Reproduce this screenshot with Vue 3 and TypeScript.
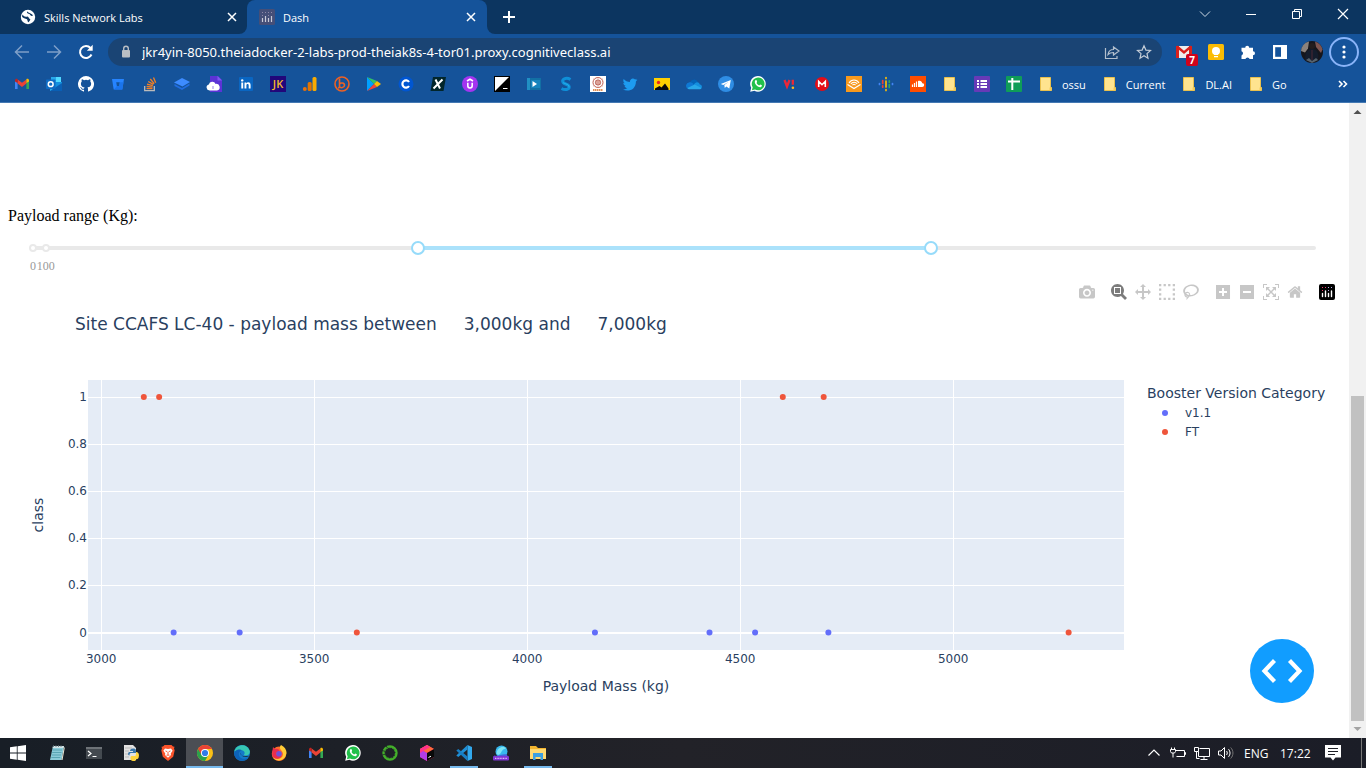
<script setup lang="ts">
import { computed, onBeforeUnmount, onMounted, ref } from 'vue'

interface Bookmark {
  name: string
  icon: string
  label?: string
}

interface Series {
  name: string
  color: string
  points: [number, number][]
}

const gmail =
  '<path d="M1 13V4.200L3.600 6v7z" fill="#4285f4"/><path d="M12.400 13V6L15 4.200V13z" fill="#34a853"/><path d="M3.600 7.500V3.500L8 6.800 12.400 3.500v4L8 11z" fill="#ea4335"/><path d="M1 4.600C1 2.800 2.700 2.400 3.600 3.200V7L1 5.500z" fill="#c5221f"/><path d="M15 4.600c0-1.800-1.700-2.200-2.600-1.400V7L15 5.500z" fill="#fbbc04"/>'
const whatsapp =
  '<path d="M.2 15.800 1.200 11.800A7.800 7.800 0 1 1 4.400 14.800z" fill="#fff"/><path d="M1.900 14.200 2.700 11.300A6.400 6.400 0 1 1 5 13.500z" fill="#22c04a"/><path d="M5.400 4.300c.5-.4 1-.3 1.200.2l.5 1.200c.1.400-.5.900-.6 1.200.6 1.200 1.500 2 2.700 2.500.4-.1.800-1 1.200-.9l1.400.7c.3.300-.1 1.300-.6 1.700-1.200.8-3 .1-4.600-1.300C5 8.100 4.100 5.800 5.400 4.300z" fill="#fff"/>'
const folder =
  '<path d="M2.500 1.500h10v10h1v3h-11z" fill="#ffe48f" stroke="#e9c04d"/><path d="M11.500 11.500h2v3h-2z" fill="#f5cc5b"/>'

const bookmarks: Bookmark[] = [
  { name: 'Gmail', icon: gmail },
  { name: 'Outlook', icon: '<path d="M5 1h10v6H5z" fill="#28a8ea"/><path d="M10 1h5v6h-5z" fill="#50d9ff"/><path d="M4 6h12v9H4z" fill="#1490df"/><path d="M4 8l6 4 6-5v8H4z" fill="#28a8ea"/><path d="M4 15l12-8v8z" fill="#0a5fb4"/><rect y="3.500" width="9.500" height="9.500" rx=".8" fill="#0f6cc4"/><circle cx="4.700" cy="8.200" r="2.400" fill="none" stroke="#fff" stroke-width="1.500"/>' },
  { name: 'GitHub', icon: '<path fill="#fff" d="M8 0a8 8 0 0 0-2.530 15.590c.4.070.55-.17.55-.38v-1.490c-2.230.49-2.700-.94-2.700-.94-.36-.92-.89-1.170-.89-1.170-.73-.5.050-.49.050-.49.810.06 1.230.83 1.230.83.720 1.230 1.880.87 2.340.67.070-.52.280-.88.510-1.080-1.780-.2-3.640-.89-3.640-3.950 0-.87.310-1.590.82-2.150-.08-.2-.36-1.020.08-2.120 0 0 .67-.21 2.200.82a7.600 7.600 0 0 1 4 0c1.530-1.040 2.200-.82 2.200-.82.440 1.100.16 1.920.08 2.120.51.560.82 1.270.82 2.150 0 3.070-1.870 3.750-3.650 3.950.29.250.54.730.54 1.480v2.190c0 .21.150.46.550.38A8 8 0 0 0 8 0z"/>' },
  { name: 'Bitbucket', icon: '<path fill-rule="evenodd" d="M2 3h12l-1.700 10.500H3.700zM6.200 6.300l.7 3.600h2.300l.6-3.600z" fill="#2684ff"/><path d="M13.500 6.300H9.900l-.6 3.600H6.900l-2.700 3.300.2.300h7.900z" fill="#1a74ec"/>' },
  { name: 'Stack Overflow', icon: '<path d="M2.700 10v4.700h9.600V10" fill="none" stroke="#bcbbbb" stroke-width="1.300"/><g stroke="#f48024" stroke-width="1.300"><path d="M4.500 12.700h6M4.600 10.500l6 .6M5 8.100l5.800 1.500M6.200 5.500l5.200 2.900M8.300 3l3.900 4.600M11.500 1.400l2.200 5.300"/></g>' },
  { name: 'BookStack', icon: '<path d="M0 6.500 8 2l8 4-7.500 4.500z" fill="#3d8bff"/><path d="M.5 8v2L8 14l7.500-4.500v-2L8 12z" fill="#216de0"/>' },
  { name: 'Cloud', icon: '<path d="M4 0h8l4 4v12H4z" fill="#5c33d6"/><path d="M11.500 0v4.500H16z" fill="#7e5af2"/><path d="M3.500 14.500a3 3 0 0 1-.7-5.900 3.600 3.600 0 0 1 6.800-.7 3.300 3.300 0 0 1 1.400 6.600z" fill="#fff"/><path d="M7 10v3" stroke="#9c83ea"/>' },
  { name: 'LinkedIn', icon: '<rect x="1" y="1" width="14" height="14" rx="1" fill="#0a66c2"/><circle cx="4.200" cy="4.400" r="1.200" fill="#fff"/><path d="M3.300 6.500h1.900v6H3.300zM6.500 6.500h1.800v.9c1-1.700 4.300-1.400 4.300 1.500v3.600h-1.900V9.500c0-2-2.300-1.800-2.300 0v3H6.500z" fill="#fff"/>' },
  { name: 'JK', icon: '<path d="M0 0h16v16H0z" fill="#21077a"/><text x="8" y="12" text-anchor="middle" font-family="Open Sans, sans-serif" font-size="11" font-weight="600" fill="#f5b82e">JK</text>' },
  { name: 'Analytics', icon: '<rect x="10.500" y="1" width="4" height="14" rx="1.500" fill="#f9ab00"/><rect x="5.700" y="6" width="4" height="9" rx="1.500" fill="#e37400"/><circle cx="2.800" cy="13" r="2" fill="#e8710a"/>' },
  { name: 'Bitly', icon: '<circle cx="8" cy="8" r="7" fill="none" stroke="#ee6123" stroke-width="1.600"/><path d="M5.500 2.500v8c0 .5-.5 1.500-1.500 1.500M5.500 8c1-1.600 5-1.400 5 1.200S6.500 12.500 5.500 10.500" fill="none" stroke="#ee6123" stroke-width="1.600"/>' },
  { name: 'Play Store', icon: '<path d="M1 1v14l7-7z" fill="#00a0ff"/><path d="M1 1l7 7 3-3z" fill="#32c269"/><path d="M1 15l7-7 3 3z" fill="#f0443d"/><path d="M11 5 8 8l3 3 4-3z" fill="#fbbc04"/>' },
  { name: 'Coursera', icon: '<circle cx="8" cy="8" r="7.500" fill="#0056d2"/><path d="M11 6a3.600 3.600 0 1 0 0 4" fill="none" stroke="#fff" stroke-width="2.200"/>' },
  { name: 'edX', icon: '<path d="M3 1h13l-2.500 14H.5z" fill="#02262b"/><path d="M5.500 3.500 10 12.500M12.500 3.500 3.500 12.500" stroke="#fff" stroke-width="2"/>' },
  { name: 'Udemy', icon: '<circle cx="8" cy="8" r="8" fill="#a435f0"/><path d="M5 5l3-1.800L11 5M5.800 6.800v3c0 3 4.400 3 4.400 0v-3" fill="none" stroke="#fff" stroke-width="1.600"/>' },
  { name: 'Hackr', icon: '<path d="M0 0h16v16H0z" fill="#000"/><path d="M1 1h14L1 15z" fill="#fff"/><path d="M9 12.500h4.500" stroke="#fff"/>' },
  { name: 'Video', icon: '<path d="M1 2h14v12H1z" fill="#1270a4"/><path d="M1 2h3v12H1z" fill="#2090c4"/><path d="M5 4h9v8H5z" fill="#1684bd"/><path d="M6.500 5 11 8l-4.500 3z" fill="#fff"/>' },
  { name: 'Scribe', icon: '<path d="M12.500 3.500C8 .8 3 3.500 5.200 6.500c1.500 2 6 1.800 6 4.500 0 2.500-4.200 3.500-7.700 1.500" fill="none" stroke="#0f8fd8" stroke-width="3"/><path d="M5 6.500c1.500 1.500 6.500 1.500 6 5" fill="none" stroke="#28b6ee"/>' },
  { name: 'NPTEL', icon: '<path d="M0 0h16v16H0z" fill="#fff"/><circle cx="8" cy="6.500" r="5" fill="none" stroke="#bf5e50"/><circle cx="8" cy="6.500" r="2.600" fill="#dfa79c" stroke="#a3392d" stroke-width=".7"/><path d="M3 2.500l10 8M13 2.500l-10 8M8 1v11" stroke="#d99b90" stroke-width=".5"/><path d="M3 14h10" stroke="#e08f57" stroke-width="1.800" stroke-dasharray="1.500 .5"/>' },
  { name: 'Twitter', icon: '<path d="M15.500 3.800l-1.600.5L15 2.800l-1.900.7C11 1.500 7.800 3 7.900 6 5.500 5.900 3.300 4.700 1.700 2.900.9 4.500 1.300 6.200 2.700 7.200L1.300 6.800c0 1.500 1 2.700 2.500 3.100l-1.300.1c.4 1.200 1.500 2 2.900 2.100-1.300 1-3 1.500-4.700 1.200 5.500 3.300 13.300.2 13.200-7.800z" fill="#1d9bf0"/>' },
  { name: 'Pictures', icon: '<path d="M0 2h16v12H0z" fill="#ffd000"/><circle cx="4.500" cy="6.500" r="1.700" fill="#e8261d"/><path d="M1 14v-1.500L5.500 10l2 1.500 3.500-4 3.500 5V14z" fill="#0b0b0b"/>' },
  { name: 'OneDrive', icon: '<path d="M4 7a4.200 4.200 0 0 1 8-.8L8 10z" fill="#0364b8"/><path d="M1.500 12.500A3.300 3.300 0 0 1 3 6.500C5 6 7 7 8 9z" fill="#0f78d4"/><path d="M8 9c1-3.500 5-3.500 5.800-.6 2.400.3 2.700 3.100 1.200 4.300z" fill="#1490df"/><path d="M1.300 12 8.500 8.500l7 3.500c-.4 1-1.300 1.300-2 1.300H3.700c-1 0-2-.5-2.400-1.300z" fill="#28a8ea"/>' },
  { name: 'Telegram', icon: '<circle cx="8" cy="8" r="8" fill="#2f8de4"/><path d="M2.800 8 12.800 4l-1.500 8.600-3-2.100-1.500 1.600-.5-3L10.500 6 5.200 8.900z" fill="#fff"/>' },
  { name: 'WhatsApp', icon: whatsapp },
  { name: 'Vi', icon: '<path d="M2.500 4 5 10.500 7.500 4M10.800 3.700v5" fill="none" stroke="#ee2737" stroke-width="2.300"/><circle cx="10.900" cy="11.800" r="1.300" fill="#ffb81c"/>' },
  { name: 'MEGA', icon: '<circle cx="8" cy="8" r="7" fill="#e30d17"/><path d="M4.700 11V5.500L8 8.700l3.300-3.200V11" fill="none" stroke="#fff" stroke-width="1.600"/>' },
  { name: 'Audible', icon: '<path d="M0 0h16v16H0z" fill="#f8991c"/><path d="M1.500 8.500 8 12.500l6.500-4M3 7c2.500-4 7.500-4 10 0M4.800 8c1.700-2.500 5-2.300 6.500 0M6.500 9.200c1-1.200 2-1.200 3 0" fill="none" stroke="#fff" stroke-width="1.100"/>' },
  { name: 'Podcasts', icon: '<g stroke-width="1.700" stroke-linecap="round"><path d="M1.500 7.500v1M14.500 7.500v1" stroke="#4285f4"/><path d="M4.700 4.500v3M4.700 9.800v1.400" stroke="#ea4335"/><path d="M8 1.500v1M8 5v6M8 13.500v1" stroke="#fbbc04"/><path d="M11.300 4.800v1.400M11.300 8.500v3" stroke="#34a853"/></g>' },
  { name: 'SoundCloud', icon: '<path d="M0 0h16v16H0z" fill="#ff4d00"/><path d="M2.500 8.500v2.500M4.500 7v4M6.500 5.500V11" stroke="#fff" stroke-width="1.200"/><path d="M8 11V5c2-1 4 .2 4.200 2.300 2.600-.5 2.600 3.700 0 3.700z" fill="#fff"/>' },
  { name: 'Folder', icon: folder },
  { name: 'Forms', icon: '<rect width="16" height="16" rx="1" fill="#673ab7"/><path d="M3 5h2M3 8h2M3 11h2M6.500 5H13M6.500 8H13M6.500 11H13" stroke="#fff" stroke-width="1.800"/>' },
  { name: 'Sheets', icon: '<rect width="16" height="16" rx="1" fill="#0f9d58"/><path d="M2 5.500h12M6.300 2v12" stroke="#fff" stroke-width="2"/><path d="M8 9.500h5" stroke="#0f9d58"/>' },
  { name: 'ossu', icon: folder, label: 'ossu' },
  { name: 'Current', icon: folder, label: 'Current' },
  { name: 'DL.AI', icon: folder, label: 'DL.AI' },
  { name: 'Go', icon: folder, label: 'Go' },
]

const extensions = [
  { name: 'Mail checker', icon: '<path d="M0 2h16v12H0z" fill="#eee"/><path d="M0 2h3v12H0zM13 2h3v12h-3z" fill="#d9201c"/><path d="M1 2.500l7 6 7-6" fill="none" stroke="#d9201c" stroke-width="2.400"/>', badge: '7' },
  { name: 'Keep', icon: '<rect width="16" height="16" rx="1.500" fill="#fbbc04"/><circle cx="8" cy="7" r="4" fill="#fff"/><path d="M6 9h4v2H6zM6 12h4v1.200H6z" fill="#fff"/>' },
  { name: 'Extensions', icon: '<path d="M1.500 3.800h3.700a2 2 0 1 1 4 0H13v3.400a2 2 0 1 1 0 4V15H9.600a2.200 2.200 0 0 0-4.200 0H1.500v-3.600a2.200 2.200 0 0 0 0-4.200z" fill="#fff"/>' },
  { name: 'Side panel', icon: '<path d="M1 1h14v14H1z" fill="#fff"/><path d="M3.200 3.200H9v9.600H3.200z" fill="#15539a"/>' },
]

const apps = [
  { name: 'Notepad', icon: '<path d="M4 1h11l-2.500 14H1z" fill="#8bcbd8"/><path d="M4 1h11l-.4 2H3.600z" fill="#d2e3e6"/><path d="M3.500 5h9.500M3.200 7.500H12.500M2.800 10H12M2.300 12.500h9" stroke="#4d9aaa" stroke-width=".8"/><path d="M15.300 2.500 13 15" stroke="#f2edda"/><path d="M4.500 0v2M7 0v2M9.500 0v2M12 0v2" stroke="#586970" stroke-width=".8"/>' },
  { name: 'Terminal', icon: '<path d="M0 2h16v12H0z" fill="#444a50"/><path d="M0 2h16v2H0z" fill="#6e7378"/><path d="M2 6l3 2.500L2 11M6.500 11.500h4" fill="none" stroke="#fff" stroke-width="1.200"/>' },
  { name: 'IDLE', icon: '<path d="M1 0h9l3 3v12H1z" fill="#e2e2e2"/><path d="M2 3h7M2 6h4M2 9h3M2 12h4" stroke="#b9b9b9"/><path d="M10 3.500c3 0 3 1 3 4.500H8c-1.300 0-1.500 1-1.500 2.500C4.500 10.500 4.800 7 6.500 7H10V6H7c0-1.500 1-2.500 3-2.500z" fill="#3776ab"/><path d="M13 7c3 0 3.500 3 2.500 6-.4 1-1.500 1.200-3 1.200V16H10c-2 0-2.500-1.500-2.500-3s.5-2 2-2H12C13 11 13 9 13 7z" fill="#ffd43b"/>' },
  { name: 'Brave', icon: '<path d="M4.500 0h7L13 1.500l1.500.2-.5 2 .7 1.500-1.500 6.500L8 16l-5.200-4.300L1.300 5.200 2 3.700l-.5-2L3 1.500z" fill="#fb542b"/><path d="M5 3.500 8 4l3-.5 1.600 2.300-1.900 2.700.3 1.400L8 12.800 5 9.900l.3-1.400-1.900-2.700z" fill="#fff"/><path d="M5.500 6l1.800.7M10.500 6l-1.800.7M8 7v3M6.500 10.200h3" stroke="#fb542b" stroke-width=".9"/>' },
  { name: 'Chrome', active: true, icon: '<circle cx="8" cy="8" r="8" fill="#fbc116"/><path d="M1.070 4A8 8 0 0 0 8 16l3.460-6L8 8z" fill="#2ba24c"/><path d="M8 4h6.930A8 8 0 0 0 1.070 4L4.540 10z" fill="#ea4335"/><circle cx="8" cy="8" r="4" fill="#fff"/><circle cx="8" cy="8" r="3.100" fill="#317be9"/>' },
  { name: 'Edge', icon: '<circle cx="8" cy="8" r="8" fill="#1479c9"/><path d="M.3 6.500C2-1.500 13.500-2.200 15.800 6c.6 3.500-3 5.500-6 4 1.700-1.800.8-4.500-2.300-4.700C4.400 5.100 1.500 5.900.3 6.500z" fill="#37c7b2"/><path d="M.2 9C1 3.500 6.500 4 8 5.300 5 6 4 9 5.500 11.500 7 14 11 14.600 14.400 12.700A8 8 0 0 1 .2 9z" fill="#0d62b8"/><path d="M6.500 7.800c-.5 2.500 3 4.600 9 3-3.200 2.600-8.500 1.200-9-3z" fill="#1c2028"/>' },
  { name: 'Firefox', icon: '<circle cx="8" cy="8.800" r="7.200" fill="#ff6a28"/><path d="M10 0c4.800 2.500 7 7 4.500 11.200C12.500 16 5 17 2 12.500c4 2.600 9 1.500 10-2.500.7-3-2.300-4.500-3-6.500C8.600 2.200 9 1 10 0z" fill="#ffcb36"/><path d="M1.500 5.500 2 2l2 2c2.500-.5 4 .5 4.500 2L5.500 7.500c-1 3 2.500 4.500 5.500 3-2 4.500-8.800 4-9.800-.5z" fill="#e92d4e"/><circle cx="8" cy="8.800" r="2.800" fill="#7051d8"/>' },
  { name: 'Gmail', icon: gmail },
  { name: 'WhatsApp', icon: whatsapp },
  { name: 'Anaconda', icon: '<circle cx="8" cy="8" r="6.600" fill="none" stroke="#43b02a" stroke-width="2.200"/><circle cx="8" cy="8" r="5.400" fill="none" stroke="#43b02a" stroke-width="1" stroke-dasharray="2 1"/><path d="M0 5.500l3 .8M.3 10l2.700-.8M4 .8 5.500 3" stroke="#1f2229" stroke-width=".8"/>' },
  { name: 'Toolbox', icon: '<path d="M8 0l7 4v8l-7 4-7-4V4z" fill="#fe2857"/><path d="M1 4l7-4 7 4-7 4z" fill="#ff6b3d"/><path d="M1 4l7 4v8l-7-4z" fill="#b13de8"/><path d="M8 0 1 4v4l10-6z" fill="#ff318c"/><path d="M8 8l7-4v8l-7 4z" fill="#090909"/><path d="M9.500 12.500l2.500-1.300" stroke="#fff"/>' },
  { name: 'VS Code', running: true, icon: '<path d="M11.500 0 16 2v12l-4.500 2z" fill="#32a9ee"/><path d="M11.500 0v4.500L2.300 12 .3 10.500z" fill="#1f8fd6"/><path d="M11.500 16v-4.500L2.300 4 .3 5.500z" fill="#187fc5"/>' },
  { name: 'Dev preview', icon: '<circle cx="8.500" cy="6.500" r="6" fill="#37b8ed"/><path d="M3.500 8.500C4 2.500 10 .5 13 3.500 8 4 9 9 5 10z" fill="#7de4f4"/><path d="M1 10.500c5 1 8-2 13-1l1 3H1z" fill="#4763db"/><rect y="11" width="16" height="4.500" rx="1" fill="#7f35d3"/><path d="M2 13.300h12" stroke="#d9b8fa" stroke-width="1.200" stroke-dasharray="1 .6"/>' },
  { name: 'File Explorer', running: true, icon: '<path d="M0 1h6l2 2h8v11H0z" fill="#f3b52f"/><path d="M0 4h16v10H0z" fill="#ffd970"/><path d="M3 8h10v7h-2.500v-3h-5v3H3z" fill="#3c9fe0"/>' },
]

const modeGroups = [
  [{ name: 'Download plot as a png', w: 1000, d: 'm500 450c-83 0-150-67-150-150 0-83 67-150 150-150 83 0 150 67 150 150 0 83-67 150-150 150z m400 150h-120c-16 0-34 13-39 29l-31 93c-6 15-23 28-40 28h-340c-16 0-34-13-39-28l-31-94c-6-15-23-28-40-28h-120c-55 0-100-45-100-100v-450c0-55 45-100 100-100h800c55 0 100 45 100 100v450c0 55-45 100-100 100z m-400-550c-138 0-250 112-250 250 0 138 112 250 250 250 138 0 250-112 250-250 0-138-112-250-250-250z m365 380c-19 0-35 16-35 35 0 19 16 35 35 35 19 0 35-16 35-35 0-19-16-35-35-35z' }],
  [
    { name: 'Zoom', w: 1000, on: true, d: 'm1000-25l-250 251c40 63 63 138 63 218 0 224-182 406-407 406-224 0-406-182-406-406s183-406 407-406c80 0 155 22 218 62l250-250 125 125z m-812 250l0 438 437 0 0-438-437 0z m62 375l313 0 0-312-313 0 0 312z' },
    { name: 'Pan', w: 1000, d: 'm1000 350l-187 188 0-125-250 0 0 250 125 0-188 187-187-187 125 0 0-250-250 0 0 125-188-188 186-187 0 125 252 0 0-250-125 0 187-188 188 188-125 0 0 250 250 0 0-126 187 188z' },
    { name: 'Box Select', w: 1000, d: 'm0 850l0-143 143 0 0 143-143 0z m286 0l0-143 143 0 0 143-143 0z m285 0l0-143 143 0 0 143-143 0z m286 0l0-143 143 0 0 143-143 0z m-857-286l0-143 143 0 0 143-143 0z m857 0l0-143 143 0 0 143-143 0z m-857-285l0-143 143 0 0 143-143 0z m857 0l0-143 143 0 0 143-143 0z m-857-286l0-143 143 0 0 143-143 0z m286 0l0-143 143 0 0 143-143 0z m285 0l0-143 143 0 0 143-143 0z m286 0l0-143 143 0 0 143-143 0z' },
    { name: 'Lasso Select', w: 1031, d: 'm1018 538c-36 207-290 336-568 286-277-48-473-256-436-463 10-57 36-108 76-151-13-66 11-137 68-183 34-28 75-41 114-42l-55-70 0 0c-2-1-3-2-4-3-10-14-8-34 5-45 14-11 34-8 45 4 1 1 2 3 2 5l0 0 113 140c16 11 31 24 45 40 4 3 6 7 8 11 48-3 100 0 151 9 278 48 473 255 436 462z m-624-379c-80 14-149 48-197 96 42 42 109 47 156 9 33-26 47-66 41-105z m-187-74c-19 16-33 37-39 60 50-32 109-55 174-68-42-25-95-24-135 8z m360 75c-34-7-69-9-102-8 8 62-16 128-68 170-73 59-175 54-244-5-9 20-16 40-20 61-28 159 121 317 333 354s407-60 434-217c28-159-121-318-333-355z' },
  ],
  [
    { name: 'Zoom in', w: 875, d: 'm1 787l0-875 875 0 0 875-875 0z m687-500l-187 0 0-187-125 0 0 187-188 0 0 125 188 0 0 187 125 0 0-187 187 0 0-125z' },
    { name: 'Zoom out', w: 875, d: 'm0 788l0-876 875 0 0 876-875 0z m688-500l-500 0 0 125 500 0 0-125z' },
    { name: 'Autoscale', w: 1000, d: 'm250 850l-187 0-63 0 0-62 0-188 63 0 0 188 187 0 0 62z m688 0l-188 0 0-62 188 0 0-188 62 0 0 188 0 62-62 0z m-875-938l0 188-63 0 0-188 0-62 63 0 187 0 0 62-187 0z m875 188l0-188-188 0 0-62 188 0 62 0 0 62 0 188-62 0z m-125 188l-1 0-93-94-156 156 156 156 92-93 2 0 0 250-250 0 0-2 93-92-156-156-156 156 94 92 0 2-250 0 0-250 0 0 93 93 157-156-157-156-93 94 0 0 0-250 250 0 0 0-94 93 156 157 156-157-93-93 0 0 250 0 0 250z' },
    { name: 'Reset axes', w: 928, d: 'm786 296v-267q0-15-11-26t-25-10h-214v214h-143v-214h-214q-15 0-25 10t-11 26v267q0 1 0 2t0 2l321 264 321-264q1-1 1-4z m124 39l-34-41q-5-5-12-6h-2q-7 0-12 3l-386 322-386-322q-7-4-13-4-7 2-12 7l-35 41q-4 5-3 13t6 12l401 334q18 15 42 15t43-15l136-114v109q0 8 5 13t13 5h107q8 0 13-5t5-13v-227l122-102q5-5 6-12t-4-13z' },
  ],
]

const low = ref(3000)
const high = ref(7000)
const maxPayload = 10000
const marks = [0, 100]
const share = (v: number) => (v / maxPayload) * 100 + '%'

const series: Series[] = [
  { name: 'v1.1', color: '#636efa', points: [[3170, 0], [3325, 0], [4159, 0], [4428, 0], [4535, 0], [4707, 0]] },
  { name: 'FT', color: '#ef553b', points: [[3100, 1], [3136, 1], [4600, 1], [4696, 1], [3600, 0], [5271, 0]] },
]

const chartEl = ref<HTMLElement | null>(null)
const chartWidth = ref(1333)
const plot = { left: 80, right: 217, top: 100, height: 270 }
const plotWidth = computed(() => chartWidth.value - plot.left - plot.right)
const xAt = (mass: number) => plot.left + ((mass - 2969) / 2432) * plotWidth.value
const yAt = (v: number) => plot.top + 252.5 - v * 235.5
const xTicks = [3000, 3500, 4000, 4500, 5000]
const yTicks = [0, 0.2, 0.4, 0.6, 0.8, 1]
const kg = (v: number) => v.toLocaleString('en-US') + 'kg'
const title = computed(
  () => `Site CCAFS LC-40 - payload mass between     ${kg(low.value)} and     ${kg(high.value)}`,
)

let observer: ResizeObserver | undefined
onMounted(() => {
  observer = new ResizeObserver((entries) => {
    chartWidth.value = Math.round(entries[0].contentRect.width)
  })
  if (chartEl.value) observer.observe(chartEl.value)
})
onBeforeUnmount(() => observer?.disconnect())
</script>

<template>
  <div class="desktop">
    <header class="browser">
      <div class="tabstrip">
        <div class="tab first">
          <svg class="i16" viewBox="0 0 16 16"><circle cx="8" cy="8" r="7.200" fill="#fff" /><path d="M2.500 5.500C4 7.500 5 8 7.500 7.500c1.500 0 1 2.500 2.500 2.500 1 .5-.5 2-1.500 3.200-.8 0-.8-2-1.500-3C5.500 9.700 2.500 9 2 7.500zM7 2.500c1 .2 1 1 2.500 1.500S12 5 13 6.500c-1.500 1.200-3-.5-3.500-1.500C8 4.700 6.500 4.300 7 2.500z" fill="#0c3560" /></svg>
          <span class="tab-title">Skills Network Labs</span>
          <button class="bare close" aria-label="Close Skills Network Labs"><svg class="i16" viewBox="0 0 16 16"><path d="M4 4l8 8M12 4l-8 8" stroke="#fff" stroke-width="1.500" /></svg></button>
        </div>
        <div class="tab active">
          <svg class="i16" viewBox="0 0 16 16"><rect width="16" height="16" rx="1.500" fill="#454f78" /><path d="M3.500 9v4M6.500 7v6M9.500 9v4M12.500 7v6" stroke="#c8cad8" stroke-width="1.200" /><path d="M3 3.500h1M6 3.500h1M9 3.500h1M12 3.500h1M3 6.500h1M9 6.500h1" stroke="#8f88a8" /></svg>
          <span class="tab-title">Dash</span>
          <button class="bare close" aria-label="Close Dash"><svg class="i16" viewBox="0 0 16 16"><path d="M4 4l8 8M12 4l-8 8" stroke="#fff" stroke-width="1.500" /></svg></button>
        </div>
        <div class="new-tab-slot">
          <button class="bare" aria-label="New tab"><svg class="i16" viewBox="0 0 16 16"><path d="M8 2v12M2 8h12" stroke="#fff" stroke-width="2" /></svg></button>
        </div>
        <div class="window-controls">
          <button class="bare" aria-label="Search tabs"><svg class="i16" viewBox="0 0 16 16"><path d="M3 5.500l5 5 5-5" fill="none" stroke="#cfdae6" /></svg></button>
          <button class="bare" aria-label="Minimize"><svg class="i16" viewBox="0 0 16 16"><path d="M3 8.500h10" stroke="#fff" /></svg></button>
          <button class="bare" aria-label="Restore"><svg class="i16" viewBox="0 0 16 16"><path d="M3.500 5.500h7v7h-7zM5.500 5.500v-2h7v7h-2" fill="none" stroke="#fff" /></svg></button>
          <button class="bare" aria-label="Close window"><svg class="i16" viewBox="0 0 16 16"><path d="M3 3l10 10M13 3L3 13" stroke="#fff" stroke-width="1.200" /></svg></button>
        </div>
      </div>

      <div class="toolbar">
        <button class="bare nav" aria-label="Back"><svg class="i16" viewBox="0 0 16 16"><path d="M15 8H2M8 1.500 1.500 8 8 14.500" fill="none" stroke="#7e9fc8" stroke-width="1.500" /></svg></button>
        <button class="bare nav" aria-label="Forward"><svg class="i16" viewBox="0 0 16 16"><path d="M1 8h13M8 1.500 14.500 8 8 14.500" fill="none" stroke="#7e9fc8" stroke-width="1.500" /></svg></button>
        <button class="bare nav" aria-label="Reload"><svg class="i16" viewBox="0 0 16 16"><path d="M13.500 10.500A6 6 0 1 1 12.500 4" fill="none" stroke="#fff" stroke-width="2" /><path d="M14.700.8v6H8.800z" fill="#fff" /></svg></button>
        <div class="omnibox">
          <svg class="i16" viewBox="0 0 16 16"><rect x="4" y="6" width="8" height="7.500" rx="1" fill="#b9bec4" /><path d="M5.700 7V4.500a2.300 2.300 0 0 1 4.600 0V7" fill="none" stroke="#b9bec4" stroke-width="1.400" /></svg>
          <input class="address" type="text" aria-label="Address" value="jkr4yin-8050.theiadocker-2-labs-prod-theiak8s-4-tor01.proxy.cognitiveclass.ai" />
          <button class="bare nav" aria-label="Share"><svg class="i16" viewBox="0 0 16 16"><path d="M1.500 4v10.500H13V12M4 10.500C4.500 7 6.500 5.500 9.500 5.500V3L15 7l-5.500 4V8.500C7 8.500 5.500 9 4 10.500z" fill="none" stroke="#b3bfcd" stroke-width="1.200" /></svg></button>
          <button class="bare nav star" aria-label="Bookmark this tab"><svg class="i16" viewBox="0 0 16 16"><path d="M8 1.800l1.900 4.300 4.600.4-3.500 3.100 1 4.600L8 11.800l-4 2.400 1-4.600L1.500 6.500l4.600-.4z" fill="none" stroke="#c3ccd7" stroke-width="1.200" /></svg></button>
        </div>
        <div class="extensions">
          <button v-for="e in extensions" :key="e.name" class="bare nav ext" :aria-label="e.name">
            <svg class="i16" viewBox="0 0 16 16" v-html="e.icon"></svg>
            <span v-if="e.badge" class="badge">{{ e.badge }}</span>
          </button>
          <button class="bare nav" aria-label="Profile">
            <svg class="avatar" viewBox="0 0 22 22"><circle cx="11" cy="11" r="11" fill="#16161c" /><path d="M0 10A11 11 0 0 1 8 .5l-1 7-3 4z" fill="#8c827c" /><path d="M14 .6a11 11 0 0 1 7.500 8L20 12l-5-6z" fill="#7d5550" /><circle cx="11" cy="5" r="3" fill="#241d1d" /><path d="M4 20c0-7 1-12 7-12s7 5 6 12z" fill="#141c2c" /><path d="M11 9v10" stroke="#4a2732" /><path d="M5 19l3-2 3 3 4-3 2 2-6 3z" fill="#57626c" /></svg>
          </button>
          <button class="bare menu" aria-label="Chrome menu"><svg class="i16" viewBox="0 0 16 16" fill="#fff"><circle cx="8" cy="3" r="1.600" /><circle cx="8" cy="8" r="1.600" /><circle cx="8" cy="13" r="1.600" /></svg></button>
        </div>
      </div>

      <nav class="bookmarks" aria-label="Bookmarks">
        <a v-for="b in bookmarks" :key="b.name" class="bookmark" href="#" :aria-label="b.name">
          <svg class="i16" viewBox="0 0 16 16" v-html="b.icon"></svg>
          <span v-if="b.label">{{ b.label }}</span>
        </a>
        <button class="bare more" aria-label="More bookmarks"><svg class="i16" viewBox="0 0 16 16"><path d="M4 5l3 3-3 3M8.500 5l3 3-3 3" fill="none" stroke="#fff" stroke-width="1.600" /></svg></button>
      </nav>
    </header>

    <div class="viewport">
      <main class="page">
        <p class="range-label">Payload range (Kg):</p>
        <div class="slider">
          <div class="rail"></div>
          <div class="fill-area">
            <div class="fill" :style="{ marginLeft: share(low), width: share(high - low) }"></div>
          </div>
          <div class="marks">
            <span v-for="m in marks" :key="m" class="mark" :style="{ left: share(m) }">
              <i class="dot"></i>{{ m }}
            </span>
          </div>
          <input v-model.number="low" type="range" min="0" :max="maxPayload" step="1000" aria-label="Minimum payload" />
          <input v-model.number="high" type="range" min="0" :max="maxPayload" step="1000" aria-label="Maximum payload" />
        </div>

        <section ref="chartEl" class="chart">
          <svg class="plot" :width="chartWidth" height="450">
            <text class="title" x="67" y="50">{{ title }}</text>
            <rect :x="plot.left" :y="plot.top" :width="plotWidth" :height="plot.height" fill="#e5ecf6" />
            <g stroke="#fff" shape-rendering="crispEdges">
              <line v-for="t in xTicks" :key="t" :x1="xAt(t)" :x2="xAt(t)" :y1="plot.top" :y2="plot.top + plot.height" />
              <line v-for="t in yTicks" :key="t" :x1="plot.left" :x2="plot.left + plotWidth" :y1="yAt(t)" :y2="yAt(t)" :stroke-width="t === 0 ? 2 : 1" />
            </g>
            <g v-for="s in series" :key="s.name" :fill="s.color">
              <circle v-for="p in s.points" :key="p[0]" :cx="xAt(p[0])" :cy="yAt(p[1])" r="3" />
            </g>
            <g class="tick" text-anchor="middle">
              <text v-for="t in xTicks" :key="t" :x="xAt(t)" y="383">{{ t }}</text>
            </g>
            <g class="tick" text-anchor="end">
              <text v-for="t in yTicks" :key="t" :x="plot.left - 1" :y="yAt(t) + 4">{{ t }}</text>
            </g>
            <text class="axis" text-anchor="middle" :x="plot.left + plotWidth / 2" y="411">Payload Mass (kg)</text>
            <text class="axis" text-anchor="middle" transform="translate(35 235) rotate(-90)">class</text>
            <g :transform="`translate(${plot.left + plotWidth + 23} 0)`">
              <text class="axis" x="0" y="118">Booster Version Category</text>
              <g v-for="(s, i) in series" :key="s.name">
                <circle cx="18" :cy="133 + i * 19" r="3" :fill="s.color" />
                <text class="tick" x="38" :y="137 + i * 19">{{ s.name }}</text>
              </g>
            </g>
          </svg>
          <div class="modebar">
            <div v-for="(g, i) in modeGroups" :key="i" class="mode-group">
              <button v-for="b in g" :key="b.name" class="bare mode" :class="{ on: b.on }" :aria-label="b.name">
                <svg class="i16" :viewBox="`0 0 ${b.w} 1000`"><path :d="b.d" transform="matrix(1 0 0 -1 0 850)" /></svg>
              </button>
            </div>
            <div class="mode-group">
              <a class="mode" href="#" aria-label="Produced with Plotly">
                <svg class="i16" viewBox="0 0 16 16"><rect width="16" height="16" rx="2" fill="#000" /><path d="M3.500 9.500v3M6.500 7v5.500M9.500 9.500v3M12.500 7v5.500" stroke="#fff" stroke-width="1.400" stroke-linecap="round" /><path d="M3 3.500h1M3 6.500h1M6 3.500h1" stroke="#ef3e6d" stroke-width="1.200" /><path d="M9 3.500h1M9 6.500h1M12 3.500h1" stroke="#b8aee8" stroke-width="1.200" /></svg>
              </a>
            </div>
          </div>
        </section>

        <button class="bare devtools" aria-label="Toggle debug menu"><svg viewBox="0 0 64 64"><path d="M24.500 21.500 14.500 32l10 10.500M39.500 21.500 49.500 32l-10 10.500" fill="none" stroke="#fff" stroke-width="4.200" /></svg></button>
      </main>
      <div class="scrollbar">
        <button class="bare arrow" aria-label="Scroll up"><svg viewBox="0 0 17 17"><path d="M4.500 11 8.500 7l4 4z" fill="#505050" /></svg></button>
        <div class="track"><div class="thumb"></div></div>
        <button class="bare arrow" aria-label="Scroll down"><svg viewBox="0 0 17 17"><path d="M4.500 6 8.500 10l4-4z" fill="#a3a3a3" /></svg></button>
      </div>
    </div>

    <footer class="taskbar">
      <button class="bare start" aria-label="Start"><svg class="i16" viewBox="0 0 16 16"><path d="M0 2.300 6.800 1.300V7.500H0zM7.600 1.200 16 0v7.500H7.600zM0 8.400h6.800v6.300L0 13.700zM7.600 8.400H16V16l-8.400-1.200z" fill="#fff" /></svg></button>
      <button v-for="a in apps" :key="a.name" class="bare app" :class="{ active: a.active, running: a.running }" :aria-label="a.name">
        <svg class="i16" viewBox="0 0 16 16" v-html="a.icon"></svg>
      </button>
      <div class="tray">
        <button class="bare tray-btn" aria-label="Show hidden icons"><svg class="i16" viewBox="0 0 16 16"><path d="M2.500 10.500 8 5l5.500 5.500" fill="none" stroke="#fff" stroke-width="1.200" /></svg></button>
        <button class="bare tray-btn" aria-label="Battery"><svg class="i16" viewBox="0 0 16 16"><path d="M5.500 5.500h9v6h-8M14.500 7.500h1v2h-1" fill="none" stroke="#fff" /><path d="M1.500 2.500v2M4.500 2.500v2M.5 4.500h5v2l-1 1.500h-3l-1-1.500zM3 8v4.500" fill="none" stroke="#fff" /></svg></button>
        <button class="bare tray-btn" aria-label="Network"><svg class="i16" viewBox="0 0 16 16"><path d="M5.500 3.500h10v8h-11v-5M10 11.500v3M6.500 14.500h7" fill="none" stroke="#fff" /><path d="M.5 2.500h4v4h-4zM2.500 6.500v7h3" fill="none" stroke="#fff" /></svg></button>
        <button class="bare tray-btn" aria-label="Volume"><svg class="i16" viewBox="0 0 16 16"><path d="M.5 6H3l3.500-3.500v11L3 10H.5z" fill="none" stroke="#fff" /><path d="M8.500 6c1 1.200 1 2.800 0 4M10.500 4.200c2 2.300 2 5.300 0 7.600" fill="none" stroke="#fff" /><path d="M12.700 2.500c3 3.300 3 7.700 0 11" fill="none" stroke="#777" /></svg></button>
        <span class="lang">ENG</span>
        <time class="clock">17:22</time>
        <button class="bare notes" aria-label="Notifications"><svg class="i16" viewBox="0 0 16 16"><path d="M0 0h16v12.500h-5.500L8 15.500 5.500 12.500H0z" fill="#fff" /><path d="M3 3.500h10M3 6.500h10M3 9.500h7" stroke="#1e2027" /></svg></button>
        <button class="bare show-desktop" aria-label="Show desktop"></button>
      </div>
    </footer>
  </div>
</template>

<style>
body {
  margin: 0;
  overflow: hidden;
}
</style>

<style scoped>
.desktop {
  display: flex;
  flex-direction: column;
  height: 100vh;
  background: #fff;
  font-family: "Open Sans", "Noto Sans", sans-serif;
  font-size: 12px;
  color: #fff;
}
.bare {
  display: flex;
  align-items: center;
  justify-content: center;
  margin: 0;
  padding: 0;
  border: 0;
  background: none;
  color: inherit;
  font: inherit;
}
.i16 {
  display: block;
  flex: none;
  width: 16px;
  height: 16px;
}
.browser {
  flex: none;
  background: #15539a;
  border-bottom: 1px solid #4479b3;
}
.tabstrip {
  display: flex;
  height: 34px;
}
.tab {
  display: flex;
  align-items: center;
  gap: 8px;
  box-sizing: border-box;
  width: 240px;
  height: 34px;
  padding: 0 8px 0 12px;
  font-size: 11px;
}
.tab.first {
  width: 247px;
  padding: 0 7px 0 20px;
  background: #0c3560;
  border-bottom-right-radius: 8px;
}
.tab.active {
  position: relative;
  z-index: 0;
  background: linear-gradient(#0c3560, #0c3560) 0 0 / 100% 8px no-repeat;
}
.tab.active::before {
  content: "";
  position: absolute;
  inset: 0;
  z-index: -1;
  background: #15539a;
  border-radius: 8px 8px 0 0;
}
.tab-title {
  flex: 1;
  white-space: nowrap;
}
.new-tab-slot {
  display: flex;
  flex: 1;
  padding-left: 14px;
  background: #0c3560;
  border-bottom-left-radius: 8px;
}
.window-controls {
  display: flex;
  background: #0c3560;
}
.window-controls .bare {
  width: 46px;
  height: 28px;
}
.toolbar {
  display: flex;
  align-items: center;
  height: 36px;
  padding: 0 6px;
}
.nav {
  width: 32px;
  height: 28px;
}
.omnibox {
  display: flex;
  flex: 1;
  align-items: center;
  gap: 8px;
  height: 28px;
  margin: 0 6px;
  padding-left: 10px;
  padding-right: 2px;
  border-radius: 14px;
  background: #1a4474;
}
.star {
  margin-left: -8px;
}
.address {
  flex: 1;
  min-width: 0;
  padding: 0;
  border: 0;
  outline: 0;
  background: none;
  color: #fff;
  font: 13px "Noto Sans", "Open Sans", sans-serif;
}
.extensions {
  display: flex;
  align-items: center;
}
.ext {
  position: relative;
}
.badge {
  position: absolute;
  left: 18px;
  top: 16px;
  width: 12px;
  height: 12px;
  border-radius: 2px;
  background: #d0021b;
  font-size: 10px;
  font-weight: 700;
  line-height: 12px;
  text-align: center;
}
.avatar {
  width: 22px;
  height: 22px;
}
.menu {
  box-sizing: border-box;
  width: 30px;
  height: 30px;
  margin: 0 1px;
  border: 2px solid #8ab4f8;
  border-radius: 50%;
}
.bookmarks {
  display: flex;
  align-items: center;
  height: 28px;
  padding: 0 15px 4px 6px;
  font-size: 11px;
}
.bookmark {
  display: flex;
  align-items: center;
  gap: 8px;
  height: 28px;
  padding: 0 8px;
  color: #fff;
  text-decoration: none;
  white-space: nowrap;
}
.more {
  margin-left: auto;
}
.viewport {
  display: flex;
  flex: 1;
  min-height: 0;
}
.page {
  position: relative;
  flex: 1;
  min-width: 0;
  overflow: hidden;
  padding: 104px 8px 0;
  color: #000;
  font-family: "Liberation Serif", serif;
}
.range-label {
  margin: 0;
  font-size: 16px;
  line-height: 18px;
}
.slider {
  display: grid;
  height: 14px;
  margin: 16px 18px 38px;
  align-items: center;
}
.slider > * {
  grid-area: 1 / 1;
}
.rail {
  height: 4px;
  margin: 0 7px;
  border-radius: 2px;
  background: #e9e9e9;
}
.fill-area {
  margin: 0 7px;
}
.fill {
  height: 4px;
  background: #abe2fb;
}
.marks {
  position: relative;
  height: 14px;
  margin: 0 7px;
}
.mark {
  position: absolute;
  top: 3px;
  display: flex;
  flex-direction: column;
  align-items: center;
  gap: 5px;
  transform: translateX(-50%);
  color: #999;
  font-size: 12px;
  line-height: 18px;
}
.dot {
  box-sizing: border-box;
  width: 8px;
  height: 8px;
  border: 2px solid #e9e9e9;
  border-radius: 50%;
  background: #fff;
}
.slider input {
  position: relative;
  width: 100%;
  height: 14px;
  margin: 0;
  appearance: none;
  background: none;
  pointer-events: none;
}
.slider input::-webkit-slider-thumb {
  appearance: none;
  box-sizing: border-box;
  width: 14px;
  height: 14px;
  border: 2px solid #96dbfa;
  border-radius: 50%;
  background: #fff;
  pointer-events: auto;
}
.chart {
  position: relative;
  height: 450px;
  margin-top: -13px;
}
.plot {
  display: block;
  font-family: "DejaVu Sans", sans-serif;
  fill: #2a3f5f;
}
.title {
  font-size: 17px;
  white-space: pre;
}
.axis {
  font-size: 14px;
}
.tick {
  font-size: 12px;
}
.modebar {
  position: absolute;
  top: 2px;
  right: 2px;
  display: flex;
  gap: 8px;
}
.mode-group {
  display: flex;
}
.mode {
  display: flex;
  align-items: center;
  justify-content: center;
  width: 24px;
  height: 20px;
  fill: rgba(68, 68, 68, 0.3);
}
.mode.on {
  fill: rgba(68, 68, 68, 0.7);
}
.devtools {
  position: absolute;
  right: 35px;
  bottom: 35px;
  width: 64px;
  height: 64px;
  border-radius: 50%;
  background: #119dff;
}
.devtools svg {
  width: 64px;
  height: 64px;
}
.scrollbar {
  display: flex;
  flex-direction: column;
  width: 17px;
  background: #f1f1f1;
}
.arrow {
  width: 17px;
  height: 17px;
}
.arrow svg {
  width: 17px;
  height: 17px;
}
.track {
  display: flex;
  flex: 1;
  flex-direction: column;
  justify-content: flex-end;
}
.thumb {
  height: 54%;
  margin: 0 2px;
  background: #c1c1c1;
}
.taskbar {
  display: flex;
  flex: none;
  align-items: stretch;
  height: 30px;
  background: linear-gradient(90deg, #181e26, #222228 50%, #1b1d27);
}
.start {
  width: 38px;
  padding-right: 2px;
}
.app {
  width: 37px;
}
.app.active {
  background: #4b4e54;
  box-shadow: inset 0 -2px #76b9ed;
}
.app.running {
  background: linear-gradient(#76b9ed, #76b9ed) center bottom / 28px 2px no-repeat;
}
.tray {
  display: flex;
  align-items: center;
  margin-left: auto;
}
.tray-btn {
  width: 24px;
  height: 30px;
}
.lang {
  width: 24px;
  margin-left: 6px;
}
.clock {
  width: 28px;
  margin-left: 12px;
}
.notes {
  margin-left: 17px;
}
.show-desktop {
  width: 5px;
  height: 30px;
  margin-left: 20px;
  border-left: 1px solid #777;
}
</style>
